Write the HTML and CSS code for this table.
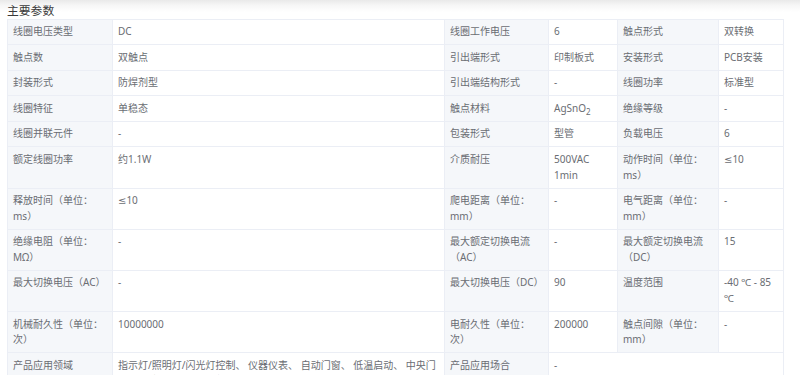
FILE: index.html
```html
<!DOCTYPE html>
<html lang="zh-CN">
<head>
<meta charset="utf-8">
<title>主要参数</title>
<link rel="stylesheet" href="styles.css">
</head>
<body>
<div class="page">
  <div class="title">主要参数</div>
  <table class="params">
    <colgroup>
      <col class="c-l1"><col class="c-v1"><col class="c-l2"><col class="c-v2"><col class="c-l3"><col class="c-v3">
    </colgroup>
    <tbody>
      <tr><th>线圈电压类型</th><td>DC</td><th>线圈工作电压</th><td>6</td><th>触点形式</th><td>双转换</td></tr>
      <tr><th>触点数</th><td>双触点</td><th>引出端形式</th><td>印制板式</td><th>安装形式</th><td>PCB安装</td></tr>
      <tr><th>封装形式</th><td>防焊剂型</td><th>引出端结构形式</th><td>-</td><th>线圈功率</th><td>标准型</td></tr>
      <tr><th>线圈特征</th><td>单稳态</td><th>触点材料</th><td>AgSnO<sub>2</sub></td><th>绝缘等级</th><td>-</td></tr>
      <tr><th>线圈并联元件</th><td>-</td><th>包装形式</th><td>型管</td><th>负载电压</th><td>6</td></tr>
      <tr><th>额定线圈功率</th><td>约1.1W</td><th>介质耐压</th><td>500VAC 1min</td><th>动作时间（单位：ms）</th><td><span class="sym">≤</span>10</td></tr>
      <tr><th>释放时间（单位：ms）</th><td><span class="sym">≤</span>10</td><th>爬电距离（单位：mm）</th><td>-</td><th>电气距离（单位：mm）</th><td>-</td></tr>
      <tr><th>绝缘电阻（单位：MΩ）</th><td>-</td><th>最大额定切换电流（AC）</th><td>-</td><th>最大额定切换电流（DC）</th><td>15</td></tr>
      <tr><th>最大切换电压（AC）</th><td>-</td><th>最大切换电压（DC）</th><td>90</td><th>温度范围</th><td>-40 ℃ - 85 ℃</td></tr>
      <tr><th>机械耐久性（单位：次）</th><td>10000000</td><th>电耐久性（单位：次）</th><td>200000</td><th>触点间隙（单位：mm）</th><td>-</td></tr>
      <tr><th>产品应用领域</th><td>指示灯/照明灯/闪光灯控制、 仪器仪表、 自动门窗、 低温启动、 中央门锁、 汽车空调、 电动座椅</td><th>产品应用场合</th><td colspan="3">-</td></tr>
    </tbody>
  </table>
</div>
</body>
</html>
```

FILE: styles.css
```css
html, body {
  margin: 0;
  padding: 0;
}
body {
  background: linear-gradient(#e9e9e9 0, #f6f6f6 5px, #ffffff 12px) no-repeat;
  font-family: "Noto Sans", "Noto Sans CJK SC", sans-serif;
  color: #6a6d73;
}
.page {
  padding: 0 0 0 7px;
}
.title {
  font-size: 11.8px;
  line-height: 19px;
  height: 19px;
  color: #3a3a3a;
  font-family: "Noto Sans CJK SC", sans-serif;
}
.params {
  table-layout: fixed;
  width: 776px;
  border-collapse: collapse;
  font-size: 10px;
  line-height: 15.7px;
}
.c-l1 { width: 105px; }
.c-v1 { width: 332px; }
.c-l2 { width: 104px; }
.c-v2 { width: 69px; }
.c-l3 { width: 101px; }
.c-v3 { width: 65px; }
.params th,
.params td {
  border: 1px solid #ebeef5;
  padding: 4.4px 5px;
  text-align: left;
  vertical-align: top;
  font-weight: normal;
  color: #6a6d73;
  overflow-wrap: break-word;
}
.params th {
  background: #f5f7fa;
}
.params td {
  background: #ffffff;
}
.params sub {
  font-size: 8px;
  line-height: 0;
  vertical-align: -3px;
}
.sym {
  font-family: "DejaVu Sans", sans-serif;
}
```
